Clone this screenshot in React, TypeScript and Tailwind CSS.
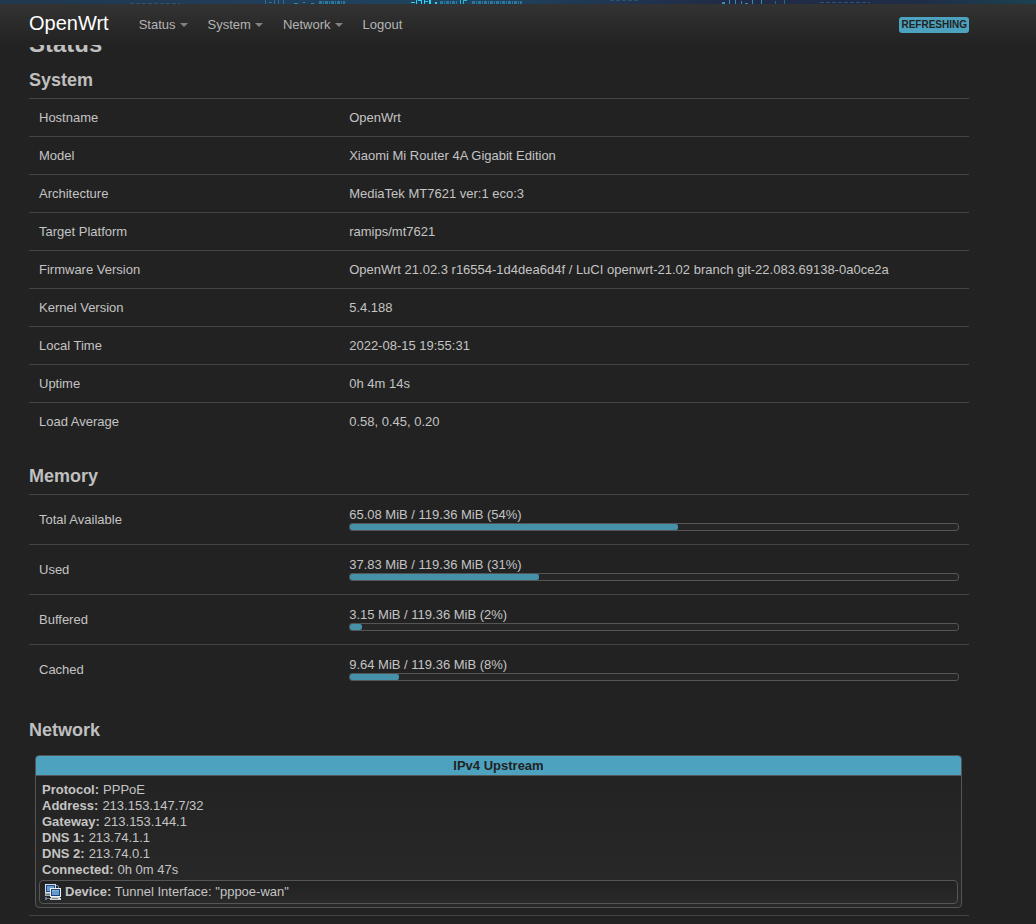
import React from "react";

const menus = [
  { label: "Status", caret: true },
  { label: "System", caret: true },
  { label: "Network", caret: true },
  { label: "Logout", caret: false },
];

const systemRows: [string, string][] = [
  ["Hostname", "OpenWrt"],
  ["Model", "Xiaomi Mi Router 4A Gigabit Edition"],
  ["Architecture", "MediaTek MT7621 ver:1 eco:3"],
  ["Target Platform", "ramips/mt7621"],
  ["Firmware Version", "OpenWrt 21.02.3 r16554-1d4dea6d4f / LuCI openwrt-21.02 branch git-22.083.69138-0a0ce2a"],
  ["Kernel Version", "5.4.188"],
  ["Local Time", "2022-08-15 19:55:31"],
  ["Uptime", "0h 4m 14s"],
  ["Load Average", "0.58, 0.45, 0.20"],
];

const memoryRows = [
  { label: "Total Available", used: "65.08", percent: 54 },
  { label: "Used", used: "37.83", percent: 31 },
  { label: "Buffered", used: "3.15", percent: 2 },
  { label: "Cached", used: "9.64", percent: 8 },
];

const upstream: [string, string][] = [
  ["Protocol", "PPPoE"],
  ["Address", "213.153.147.7/32"],
  ["Gateway", "213.153.144.1"],
  ["DNS 1", "213.74.1.1"],
  ["DNS 2", "213.74.0.1"],
  ["Connected", "0h 0m 47s"],
];

// Glyph fragments of the desktop wallpaper: x, width, y, height, colour
const specks: [number, number, number, number, string][] = [
  [265, 1, 0, 4, "#2f6f96"], [269, 3, 2, 1, "#2f6f96"], [274, 1, 0, 4, "#2f6f96"],
  [278, 1, 0, 4, "#2f6f96"], [283, 1, 0, 4, "#2f6f96"],
  [294, 4, 3, 1, "#2f86ad"], [303, 2, 2, 1, "#2f86ad"], [311, 3, 3, 1, "#2f86ad"],
  [411, 4, 2, 1, "#2fd0ea"], [416, 1, 0, 4, "#2fd0ea"], [418, 4, 0, 1, "#2fd0ea"],
  [421, 1, 0, 4, "#2fd0ea"], [424, 4, 1, 1, "#2fd0ea"], [424, 1, 0, 4, "#2fd0ea"],
  [429, 2, 0, 4, "#2fd0ea"], [435, 2, 2, 2, "#2fd0ea"],
  [460, 1, 0, 4, "#2fb4da"], [463, 4, 0, 1, "#2fb4da"], [463, 1, 0, 4, "#2fb4da"],
  [722, 3, 2, 2, "#348db0"], [729, 1, 0, 4, "#348db0"], [735, 1, 0, 4, "#348db0"],
  [741, 1, 1, 3, "#348db0"], [745, 3, 3, 1, "#348db0"], [752, 1, 0, 4, "#348db0"],
  [761, 1, 0, 4, "#348db0"], [775, 1, 1, 3, "#2a6588"], [784, 1, 0, 4, "#2a6588"],
];

function Wallpaper() {
  return (
    <svg className="block h-1 w-full" viewBox="0 0 1036 4" preserveAspectRatio="none" shapeRendering="crispEdges" aria-hidden="true">
      <defs>
        <linearGradient id="sky">
          <stop offset="0" stopColor="#20384f" />
          <stop offset="0.2" stopColor="#213c58" />
          <stop offset="0.45" stopColor="#1e4460" />
          <stop offset="0.7" stopColor="#212b47" />
          <stop offset="0.88" stopColor="#1f2c47" />
          <stop offset="1" stopColor="#1b4250" />
        </linearGradient>
      </defs>
      <rect width="1036" height="4" fill="url(#sky)" />
      <path d="M319 2.5H345M440 2.5H458M472 2.5H522" stroke="#2c779d" strokeWidth="3" strokeDasharray="3 1 1 1" />
      <path d="M610 .5H640M820 2.5H870M130 3.5H180" stroke="#2b5271" strokeDasharray="4 2" />
      {specks.map(([x, w, y, h, fill], i) => (
        <rect key={i} x={x} y={y} width={w} height={h} fill={fill} />
      ))}
    </svg>
  );
}

function TunnelIcon() {
  return (
    <svg className="h-4 w-4 shrink-0" viewBox="0 0 16 16" shapeRendering="crispEdges" aria-hidden="true">
      <path d="M11 1h2v1h1v3h-1V2h-2z" fill="#7990a9" />
      <rect x="0" y="0" width="11" height="9" fill="#d9dcdd" />
      <rect x="1" y="1" width="9" height="7" fill="#1d4d8b" />
      <rect x="2" y="2" width="7" height="5" fill="#6b9cca" />
      <path d="M0 9h6v3H0z" fill="#aeb2b4" />
      <path d="M1 10h4v1H1z" fill="#6c7276" />
      <rect x="5" y="4" width="11" height="9" fill="#f0f1f1" />
      <rect x="6" y="5" width="9" height="7" fill="#194581" />
      <rect x="7" y="6" width="7" height="5" fill="#6798c9" />
      <path d="M7 6h7v1H8v1H7z" fill="#8bb5dc" />
      <path d="M6 13h9v1h1v2H5v-2h1z" fill="#cfd2d3" />
      <path d="M7 14h6v1H7z" fill="#858b8e" />
      <path d="M0 13h2v1h3v1H2v1H0z" fill="#667b91" />
    </svg>
  );
}

function SectionTitle({ children }: { children: React.ReactNode }) {
  return <h3 className="text-lg leading-9 font-bold text-[#bfbfbf]">{children}</h3>;
}

export default function App() {
  return (
    <div className="min-h-screen bg-[#222] font-['Liberation_Sans',Arial,sans-serif] text-[13px] leading-4 text-[#c4c4c4]">
      <Wallpaper />
      <header className="sticky top-0 z-10 h-[41px] bg-linear-to-b from-[#333] to-[#222] pl-[29px]">
        <div className="flex max-w-[940px] items-start">
          <a href="#" className="mt-[9px] mr-5 text-xl leading-5 text-white">OpenWrt</a>
          <nav className="mt-[13px] flex">
            {menus.map((m) => (
              <a key={m.label} href="#" className="flex items-center gap-1 px-[10px] text-[#b4b4b4]">
                {m.label}
                {m.caret && (
                  <span className="h-0 w-0 border-x-4 border-t-4 border-x-transparent border-t-[#828282]" />
                )}
              </a>
            ))}
          </nav>
          <button type="button" className="mt-[13px] ml-auto rounded-[3px] bg-[#4da3bf] px-0.5 text-[10px] leading-4 font-bold text-[#222] uppercase">
            Refreshing
          </button>
        </div>
      </header>

      <main className="max-w-[969px] pl-[29px]">
        <h2 className="-mt-[19px] text-2xl leading-9 font-bold text-[#bfbfbf]">Status</h2>

        <section className="pb-[17px]">
          <SectionTitle>System</SectionTitle>
          <table className="w-full table-fixed">
            <tbody>
              {systemRows.map(([label, value]) => (
                <tr key={label} className="h-[38px] border-t border-[#444]">
                  <th scope="row" className="w-[33%] px-[10px] text-left font-normal">{label}</th>
                  <td className="px-[10px]">{value}</td>
                </tr>
              ))}
            </tbody>
          </table>
        </section>

        <section className="pb-[18px]">
          <SectionTitle>Memory</SectionTitle>
          <table className="w-full table-fixed">
            <tbody>
              {memoryRows.map(({ label, used, percent }) => (
                <tr key={label} className="h-[50px] border-t border-[#444]">
                  <th scope="row" className="w-[33%] px-[10px] pt-0.5 text-left font-normal">{label}</th>
                  <td className="px-[10px]">
                    <div>{used} MiB / 119.36 MiB ({percent}%)</div>
                    <div
                      role="progressbar"
                      aria-label={label}
                      aria-valuenow={percent}
                      className="h-2 rounded-[3px] border border-[#555] bg-[#262626]"
                    >
                      <div className="h-full rounded-[2px] bg-[#4491a9]" style={{ width: `${percent}%` }} />
                    </div>
                  </td>
                </tr>
              ))}
            </tbody>
          </table>
        </section>

        <section>
          <SectionTitle>Network</SectionTitle>
          <div className="border-b border-[#444] pt-[7px] pr-[7px] pb-[7px] pl-[6px]">
            <div className="overflow-hidden rounded-[4px] border border-[#555] bg-linear-to-b from-[#222] to-[#292929]">
              <h4 className="border-b border-[#555] bg-[#4da3bf] text-center leading-[19px] font-bold text-[#222]">
                IPv4 Upstream
              </h4>
              <div className="px-[3px] pt-[6px] pb-[3px]">
                <dl className="px-[3px] pb-[2px]">
                  {upstream.map(([key, value]) => (
                    <div key={key} className="flex gap-1">
                      <dt className="font-bold">{key}:</dt>
                      <dd>{value}</dd>
                    </div>
                  ))}
                </dl>
                <div className="flex h-6 items-center gap-1 rounded-[4px] border border-[#555] bg-linear-to-b from-[#222] to-[#292929] px-[5px]">
                  <TunnelIcon />
                  <span>
                    <strong>Device:</strong> Tunnel Interface: "pppoe-wan"
                  </span>
                </div>
              </div>
            </div>
          </div>
        </section>
      </main>
    </div>
  );
}
